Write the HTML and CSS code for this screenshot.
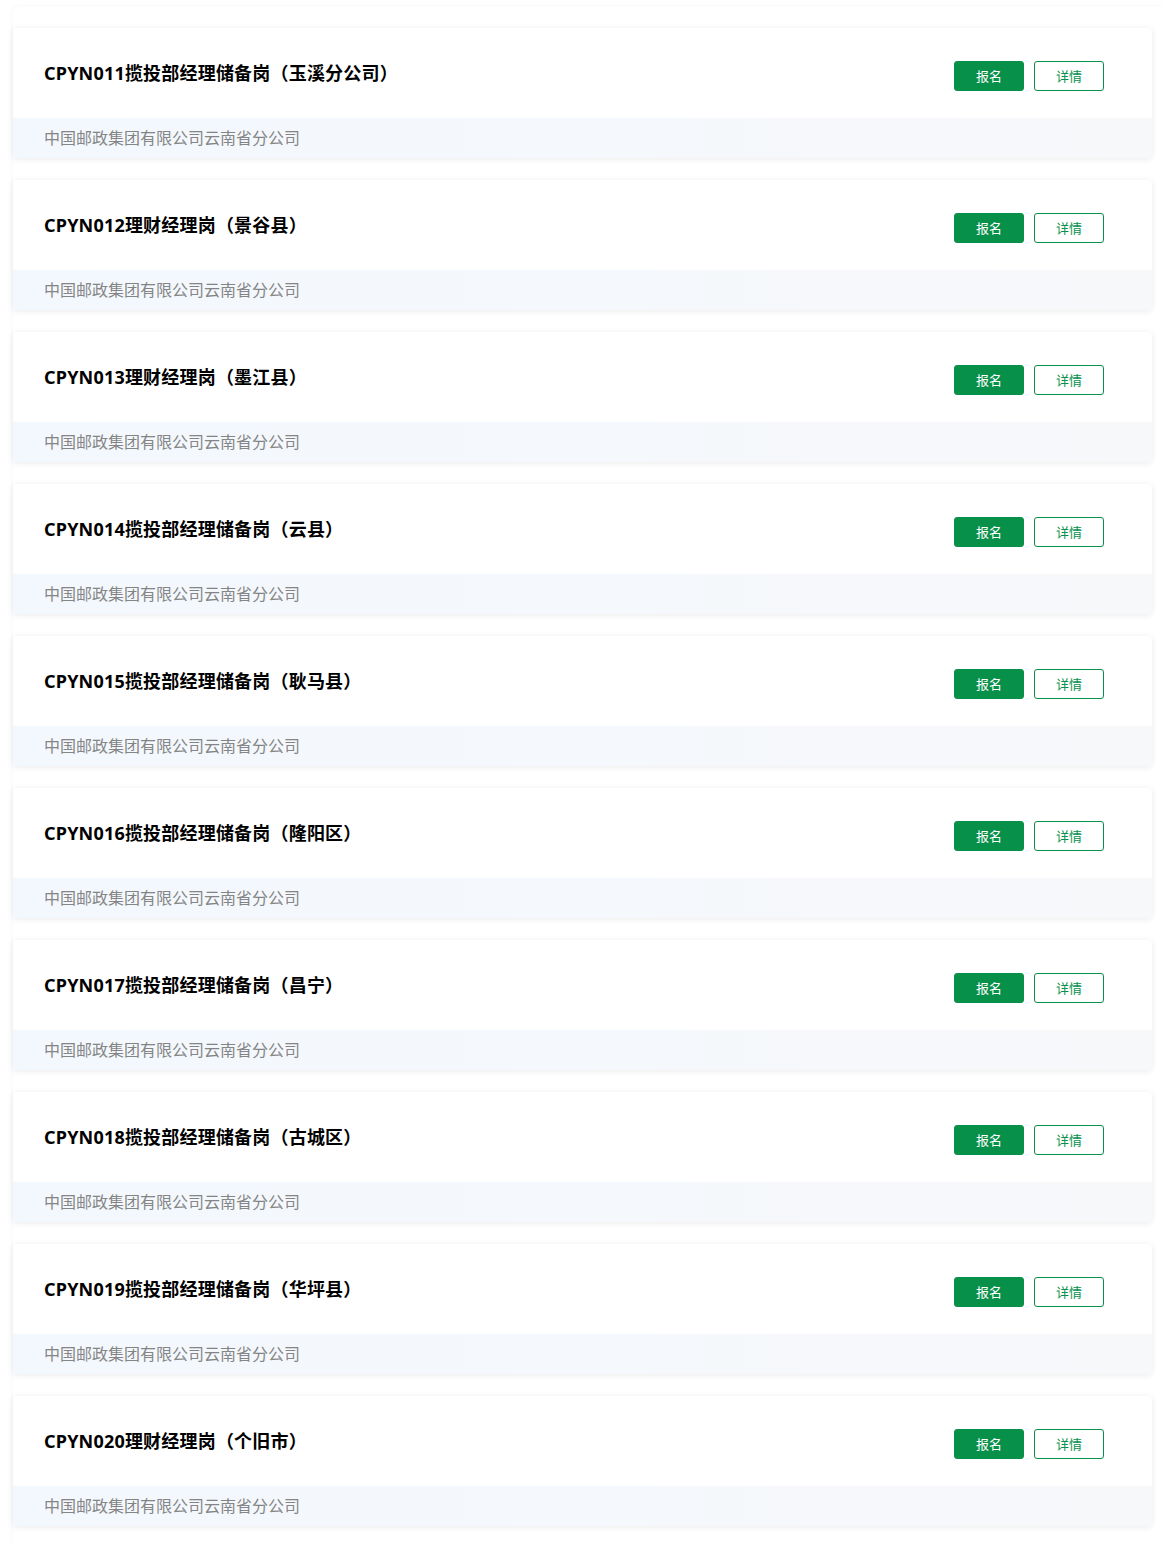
FILE: index.html
```html
<!DOCTYPE html>
<html lang="zh-CN">
<head>
<meta charset="UTF-8" />
<meta name="viewport" content="width=device-width, initial-scale=1" />
<title>岗位列表</title>
<link rel="stylesheet" href="styles.css">
</head>
<body>

<div class="job-wrap">
  <div class="job-list">

    <div class="job-card">
      <div class="job-head">
        <div class="job-title">CPYN011揽投部经理储备岗（玉溪分公司）</div>
        <div class="job-actions">
          <button class="btn btn-apply">报名</button>
          <button class="btn btn-detail">详情</button>
        </div>
      </div>
      <div class="job-foot">中国邮政集团有限公司云南省分公司</div>
    </div>

    <div class="job-card">
      <div class="job-head">
        <div class="job-title">CPYN012理财经理岗（景谷县）</div>
        <div class="job-actions">
          <button class="btn btn-apply">报名</button>
          <button class="btn btn-detail">详情</button>
        </div>
      </div>
      <div class="job-foot">中国邮政集团有限公司云南省分公司</div>
    </div>

    <div class="job-card">
      <div class="job-head">
        <div class="job-title">CPYN013理财经理岗（墨江县）</div>
        <div class="job-actions">
          <button class="btn btn-apply">报名</button>
          <button class="btn btn-detail">详情</button>
        </div>
      </div>
      <div class="job-foot">中国邮政集团有限公司云南省分公司</div>
    </div>

    <div class="job-card">
      <div class="job-head">
        <div class="job-title">CPYN014揽投部经理储备岗（云县）</div>
        <div class="job-actions">
          <button class="btn btn-apply">报名</button>
          <button class="btn btn-detail">详情</button>
        </div>
      </div>
      <div class="job-foot">中国邮政集团有限公司云南省分公司</div>
    </div>

    <div class="job-card">
      <div class="job-head">
        <div class="job-title">CPYN015揽投部经理储备岗（耿马县）</div>
        <div class="job-actions">
          <button class="btn btn-apply">报名</button>
          <button class="btn btn-detail">详情</button>
        </div>
      </div>
      <div class="job-foot">中国邮政集团有限公司云南省分公司</div>
    </div>

    <div class="job-card">
      <div class="job-head">
        <div class="job-title">CPYN016揽投部经理储备岗（隆阳区）</div>
        <div class="job-actions">
          <button class="btn btn-apply">报名</button>
          <button class="btn btn-detail">详情</button>
        </div>
      </div>
      <div class="job-foot">中国邮政集团有限公司云南省分公司</div>
    </div>

    <div class="job-card">
      <div class="job-head">
        <div class="job-title">CPYN017揽投部经理储备岗（昌宁）</div>
        <div class="job-actions">
          <button class="btn btn-apply">报名</button>
          <button class="btn btn-detail">详情</button>
        </div>
      </div>
      <div class="job-foot">中国邮政集团有限公司云南省分公司</div>
    </div>

    <div class="job-card">
      <div class="job-head">
        <div class="job-title">CPYN018揽投部经理储备岗（古城区）</div>
        <div class="job-actions">
          <button class="btn btn-apply">报名</button>
          <button class="btn btn-detail">详情</button>
        </div>
      </div>
      <div class="job-foot">中国邮政集团有限公司云南省分公司</div>
    </div>

    <div class="job-card">
      <div class="job-head">
        <div class="job-title">CPYN019揽投部经理储备岗（华坪县）</div>
        <div class="job-actions">
          <button class="btn btn-apply">报名</button>
          <button class="btn btn-detail">详情</button>
        </div>
      </div>
      <div class="job-foot">中国邮政集团有限公司云南省分公司</div>
    </div>

    <div class="job-card">
      <div class="job-head">
        <div class="job-title">CPYN020理财经理岗（个旧市）</div>
        <div class="job-actions">
          <button class="btn btn-apply">报名</button>
          <button class="btn btn-detail">详情</button>
        </div>
      </div>
      <div class="job-foot">中国邮政集团有限公司云南省分公司</div>
    </div>

  </div>
</div>

</body>
</html>
```

FILE: styles.css
```css
body {
  margin: 0;
  background: #fff;
  font-family: "Noto Sans", "Noto Sans CJK SC", sans-serif;
  color: #000;
}
/* wrapper panel, only its top edge shows */
.job-wrap {
  margin: 7px 0 0 13px;
  padding: 21px 0 19px 0;
  border-radius: 6px 0 0 0;
  box-shadow: 0 0 6px rgba(0, 0, 0, 0.04);
}
.job-list {
  display: flex;
  flex-direction: column;
  gap: 22px;
  padding-right: 12px;
}
.job-card {
  background: #fff;
  border-radius: 4px;
  box-shadow: 0 1px 6px rgba(0, 0, 0, 0.09);
  overflow: hidden;
}
.job-head {
  height: 90px;
  display: flex;
  align-items: center;
  justify-content: space-between;
  padding: 0 48px 0 31px;
}
.job-title {
  font-size: 18px;
  font-weight: 700;
  letter-spacing: 0.2px;
  color: #000;
  margin-top: -2px;
}
.job-actions {
  display: flex;
  gap: 10px;
  margin-top: 5px;
}
.btn {
  width: 70px;
  height: 30px;
  border-radius: 3px;
  font-family: "Noto Sans CJK SC", sans-serif;
  font-size: 13px;
  cursor: pointer;
  padding: 0;
}
.btn-apply {
  background: #07904a;
  border: 1px solid #07904a;
  color: #fff;
}
.btn-detail {
  background: #fff;
  border: 1px solid #07904a;
  color: #07904a;
}
.job-foot {
  height: 40px;
  line-height: 40px;
  padding-left: 31px;
  font-size: 16px;
  color: #858585;
  background: linear-gradient(90deg, #f3f8fe, #f7f8fa);
}
```
